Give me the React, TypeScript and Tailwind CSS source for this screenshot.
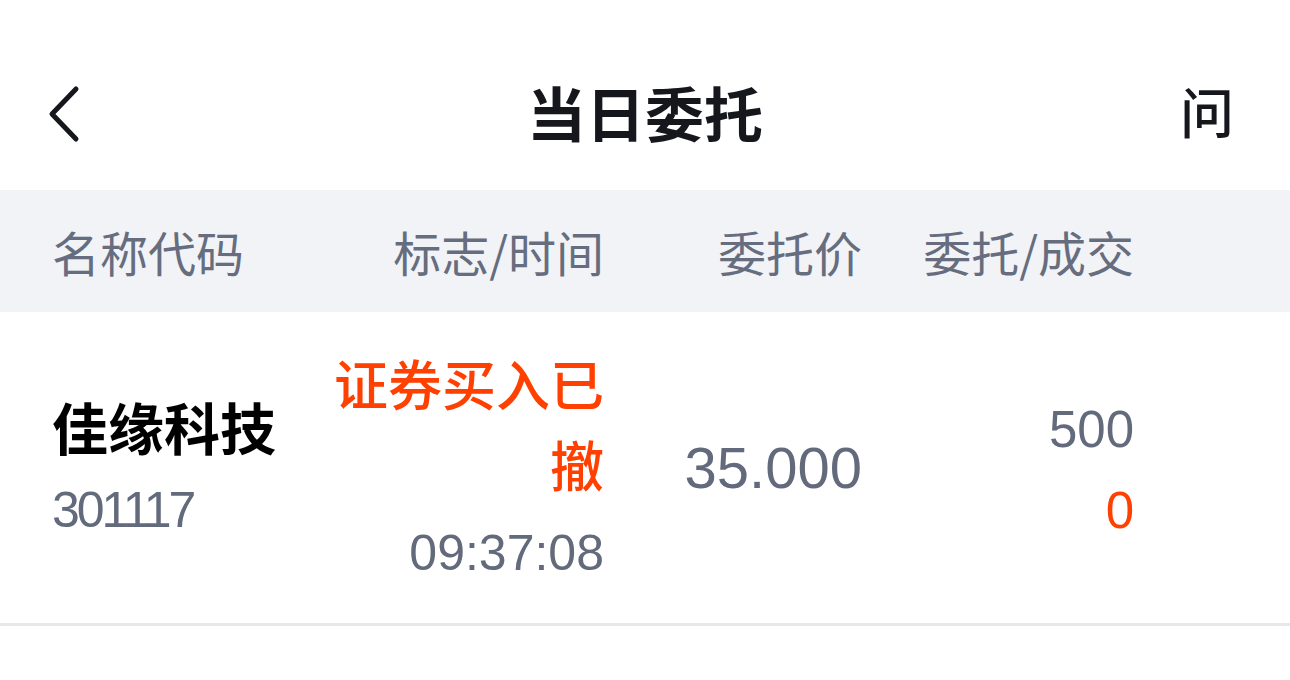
import React from 'react';

const cjk = { fontFamily: '"Noto Sans CJK SC", "Noto Sans", sans-serif' };
const num = { fontFamily: '"Liberation Sans", "Noto Sans CJK SC", sans-serif' };

function Header() {
  return (
    <div className="grid h-[190px] grid-cols-[1fr_auto_1fr] items-center bg-white px-[44px] pt-[32px]">
      <svg width="40" height="60" viewBox="0 0 40 60" className="mt-[6px] justify-self-start text-[#15171c]">
        <path d="M32 5 L8 30 L32 55" fill="none" stroke="currentColor" strokeWidth="5" strokeLinecap="round" strokeLinejoin="round" />
      </svg>
      <h1 className="text-[59px] font-bold leading-none text-[#15171c]" style={cjk}>
        当日委托
      </h1>
      <span className="mr-[12px] justify-self-end text-[54px] font-medium leading-none text-[#15171c]" style={cjk}>
        问
      </span>
    </div>
  );
}

function TableHead() {
  return (
    <div
      className="grid h-[122px] grid-cols-[278px_274px_258px_272px] items-center bg-[#f2f3f7] pl-[52px] text-[48px] text-[#666d7e]"
      style={cjk}
    >
      <div>名称代码</div>
      <div className="text-right">标志/时间</div>
      <div className="text-right">委托价</div>
      <div className="text-right">委托/成交</div>
    </div>
  );
}

function OrderRow() {
  return (
    <div className="grid h-[314px] grid-cols-[278px_274px_258px_272px] items-center border-b-[3px] border-[#e6e8ec] pl-[52px]">
      <div className="flex flex-col gap-[31px] pb-[3px]">
        <div className="text-[56px] font-bold leading-none text-black" style={cjk}>
          佳缘科技
        </div>
        <div className="text-[50px] leading-none tracking-[-3px] text-[#626a7c]" style={num}>
          301117
        </div>
      </div>
      <div className="flex flex-col items-end pb-[15px]">
        <div className="w-[274px] pl-[2px] text-right text-[54px] font-medium leading-[81px] text-[#ff4000]" style={cjk}>
          证券买入已撤
        </div>
        <div className="mt-[24px] text-[50px] leading-none text-[#626a7c]" style={num}>
          09:37:08
        </div>
      </div>
      <div className="text-right text-[58px] leading-none text-[#626a7c]" style={num}>
        35.000
      </div>
      <div className="flex flex-col items-end gap-[30px] pt-[5px]">
        <div className="text-[51px] leading-none text-[#626a7c]" style={num}>
          500
        </div>
        <div className="text-[51px] leading-none text-[#ff4000]" style={num}>
          0
        </div>
      </div>
    </div>
  );
}

export default function App() {
  return (
    <div className="min-h-screen w-full bg-white">
      <Header />
      <TableHead />
      <OrderRow />
    </div>
  );
}
